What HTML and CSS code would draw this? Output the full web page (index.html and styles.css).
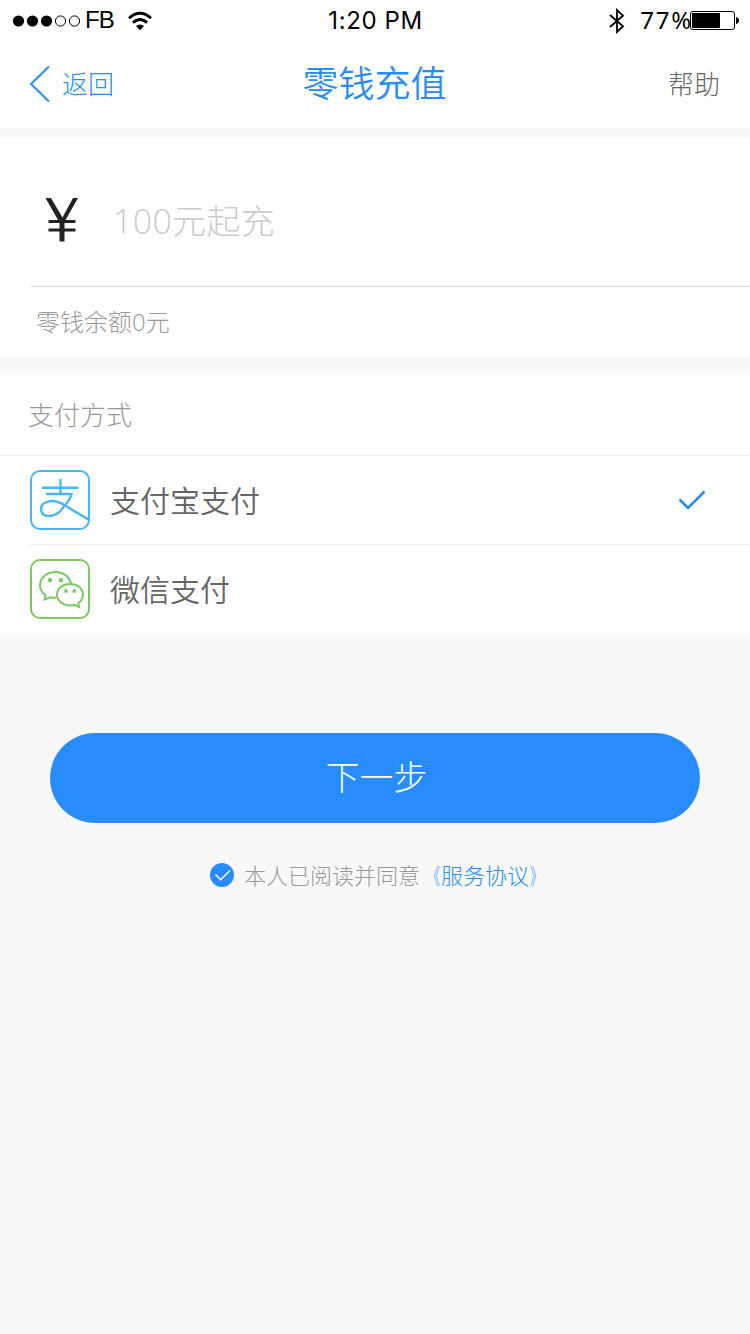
FILE: index.html
```html
<!DOCTYPE html>
<html lang="zh-CN">
<head>
<meta charset="utf-8">
<title>零钱充值</title>
<link rel="stylesheet" href="styles.css">
</head>
<body>
<header class="top">
  <div class="status">
    <div class="status-left">
      <svg class="signal" width="70" height="14" viewBox="0 0 70 14"><g fill="#000"><circle cx="6.5" cy="7" r="5.6"/><circle cx="20.5" cy="7" r="5.6"/><circle cx="34.5" cy="7" r="5.6"/></g><g fill="none" stroke="#000"><circle cx="48.5" cy="7" r="5.1"/><circle cx="62.5" cy="7" r="5.1"/></g></svg>
      <span class="carrier">FB</span>
      <svg class="wifi" width="24" height="20" viewBox="0 0 24 20"><g fill="none" stroke="#000" stroke-width="2.8"><path d="M1 7.2Q12-2.6 23 7.2"/><path d="M5 11.8Q12 5.200 19 11.8"/></g><path d="M8 15Q12 11.800 16 15L12 19.200Z"/></svg>
    </div>
    <span class="clock">1:20 PM</span>
    <div class="status-right">
      <svg class="bluetooth" width="16" height="26" viewBox="0 0 16 26"><path d="M1 7L14 18.2L8 24V2L14 7.7L1 19" fill="none" stroke="#000" stroke-width="1.8"/></svg>
      <span class="percent">77%</span>
      <svg class="battery" width="49" height="20" viewBox="0 0 49 20"><rect x=".5" y=".5" width="44" height="18" rx="2.5" fill="#fff" stroke="#000"/><rect x="2" y="2" width="28" height="15" rx="1"/><path d="M46 6Q49 6.500 49 9.500T46 13Z"/></svg>
    </div>
  </div>
  <nav class="nav">
    <a class="back"><svg width="22" height="38" viewBox="0 0 22 38"><path d="M20 1.500L2 19L20 36.500" fill="none" stroke="#288cff" stroke-width="2"/></svg><span>返回</span></a>
    <h1 class="title">零钱充值</h1>
    <a class="help">帮助</a>
  </nav>
</header>
<section class="amount">
  <div class="amount-row">
    <svg class="yen" width="34" height="44" viewBox="0 0 34 44"><path d="M.5 0H6L17.500 19.500L28 0H33L20.500 22H30.500V25H19.500V30.500H30.500V33.500H19.500V43.500H14.500V33.500H3.500V30.500H14.500V25H3.500V22H13Z" fill="#222"/></svg>
    <span class="placeholder">100元起充</span>
  </div>
  <div class="balance">零钱余额0元</div>
</section>
<section class="methods">
  <h2 class="methods-title">支付方式</h2>
  <div class="method">
    <svg class="logo" width="60" height="60" viewBox="0 0 60 60" fill="none" stroke="#49b5fa"><rect x="1" y="1" width="58" height="58" rx="9" stroke-width="2"/><path d="M30.500 9V24M12 17.800H48.500M16 24H41.500Q39.500 31 33.500 37C29.500 43.500 24.500 46 19 46C9.500 46 9 36 15 32.800C20.500 30 28 31 35 35.500L58.500 49.500" stroke-width="2.400"/></svg>
    <span class="method-name">支付宝支付</span>
    <svg class="check" width="28" height="20" viewBox="0 0 28 20"><path d="M1.500 9.500L10 18L26.500 1.500" fill="none" stroke="#288cff" stroke-width="2.600"/></svg>
  </div>
  <div class="method">
    <svg class="logo" width="60" height="60" viewBox="0 0 60 60" fill="none" stroke="#7cc963" stroke-width="2"><rect x="1" y="1" width="58" height="58" rx="9"/><path d="M26.500 38.500Q23.500 39 20.500 38.200L14.500 40.500L15.500 36Q10 32.500 10 26.500C10 18.500 17 13 25.500 13C33 13 39.500 17.500 41 24.500"/><path d="M40 25C32.500 25 27 29.500 27 35.500S32.500 46.500 40 46.500Q42.500 46.500 44.500 45.800L49 48L48.300 44Q53 41 53 35.500C53 29.500 47.500 25 40 25Z"/><g fill="#7cc963" stroke="none"><circle cx="20" cy="21.200" r="2.200"/><circle cx="30.800" cy="21.200" r="2.200"/><circle cx="36" cy="32" r="1.900"/><circle cx="44.300" cy="32" r="1.900"/></g></svg>
    <span class="method-name">微信支付</span>
  </div>
</section>
<button class="next"><span>下一步</span></button>
<div class="agreement">
  <svg width="24" height="24" viewBox="0 0 24 24"><circle cx="12" cy="12" r="12" fill="#288cff"/><path d="M5.500 11.500L10.700 16.700L20 7.500" fill="none" stroke="#fff" stroke-width="1.500"/></svg>
  <span class="agree-text">本人已阅读并同意</span><a class="agree-link"><span class="mark mark-open">《</span>服务协议<span class="mark mark-close">》</span></a>
</div>
</body>
</html>
```
FILE: styles.css
```css
* { box-sizing: border-box; }
body {
  margin: 0;
  min-height: 1334px;
  background: #f8f8f8;
  font-family: "Noto Sans CJK SC", sans-serif;
  font-weight: 300;
}
svg { display: block; flex: none; }
.top { height: 128px; background: #fff; }
.status {
  display: grid;
  grid-template-columns: 1fr auto 1fr;
  align-items: center;
  height: 40px;
  padding: 0 11px 0 12px;
  color: #000;
  font: 400 24px/40px Inter, "Liberation Sans", sans-serif;
}
.status-left, .status-right { display: flex; align-items: center; }
.status-right { justify-content: flex-end; }
.clock { letter-spacing: .6px; }
.carrier { margin-left: 3px; padding-bottom: 2px; font-family: "Liberation Sans", sans-serif; letter-spacing: -1px; }
.wifi { margin-left: 14px; }
.percent { margin-left: 14px; padding-bottom: 2px; font-family: "Noto Sans", sans-serif; letter-spacing: 1.8px; }
.battery { margin-left: -3px; }
.bluetooth { margin-right: 1px; }
.nav {
  display: grid;
  grid-template-columns: 1fr auto 1fr;
  align-items: center;
  height: 88px;
  padding: 0 30px 0 29px;
}
.back { display: flex; align-items: center; gap: 11px; color: #288cff; font-size: 26px; line-height: 38px; }
.back span { padding-bottom: 2px; }
.title { margin: 0; padding-bottom: 7px; color: #288cff; font-size: 36px; font-weight: 350; line-height: 52px; }
.help { justify-self: end; padding-bottom: 2px; color: #666; font-size: 26px; line-height: 38px; }
.amount { height: 219px; margin-top: 10px; background: #fff; }
.amount-row {
  display: flex;
  align-items: center;
  height: 149px;
  margin-left: 31px;
  padding: 16px 0 0 14px;
  border-bottom: 1px solid #d8d8d8;
}
.placeholder, .balance { font-family: "Open Sans", "Noto Sans CJK SC", sans-serif; }
.placeholder { margin-left: 34px; padding-top: 2px; color: #ccc; font-size: 34px; line-height: 52px; letter-spacing: .3px; }
.balance { padding-left: 36px; color: #999; font-size: 24px; line-height: 70px; }
.methods { height: 258px; margin-top: 18px; background: #fff; }
.methods-title {
  height: 81px;
  margin: 0;
  padding-left: 28px;
  border-bottom: 1px solid #ebebeb;
  color: #999;
  font-size: 26px;
  font-weight: 300;
  line-height: 78px;
}
.method { display: flex; align-items: center; height: 88px; margin-left: 30px; padding-right: 44px; }
.method + .method { height: 89px; border-top: 1px solid #ebebeb; }
.method-name { margin-left: 20px; padding-bottom: 3px; color: #666; font-size: 30px; font-weight: 350; line-height: 44px; }
.check { margin-left: auto; }
.next {
  display: block;
  width: 650px;
  height: 90px;
  margin: 100px auto 0;
  padding: 0 0 4px 3px;
  border: 0;
  border-radius: 45px;
  background: #288cff;
  color: #fff;
  font: inherit;
  font-size: 34px;
  line-height: 86px;
}
.agreement { display: flex; align-items: center; height: 32px; margin: 36px 0 0 210px; font-size: 22px; line-height: 32px; }
.agree-text, .agree-link { padding-bottom: 3px; }
.agree-text { margin-left: 10px; color: #999; }
.agree-link { margin-left: -1px; color: #288cff; }
.mark { display: inline-block; transform: scaleX(.58); }
.mark-open { transform-origin: 88% 50%; }
.mark-close { transform-origin: 12% 50%; }
```
